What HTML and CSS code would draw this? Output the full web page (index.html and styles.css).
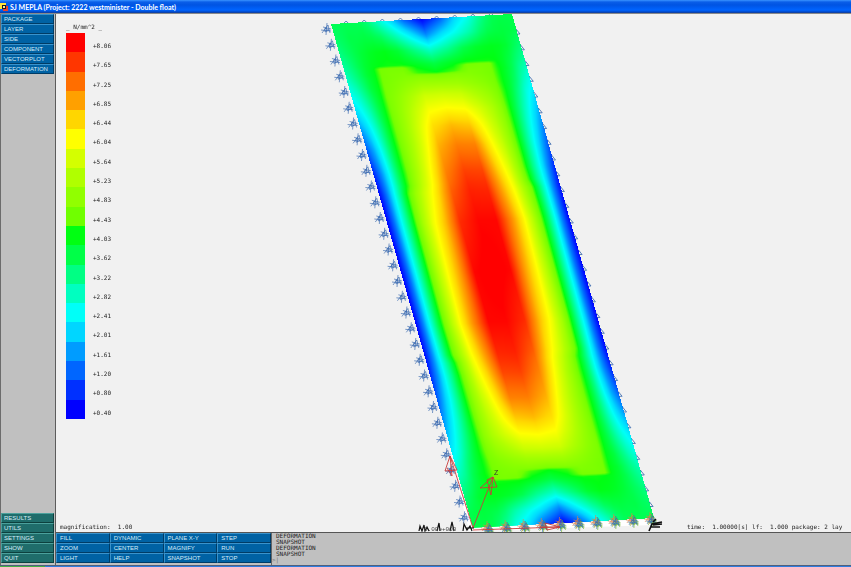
FILE: index.html
```html
<!DOCTYPE html>
<html lang="en">
<head>
<meta charset="utf-8">
<title>SJ MEPLA (Project: 2222 westminister - Double float)</title>
<link rel="stylesheet" href="styles.css">
</head>
<body>
<header class="titlebar">
  <svg class="app-icon" viewBox="0 0 8 8" aria-hidden="true">
    <rect x="0" y="0" width="6" height="6" fill="#ffe23a"/>
    <rect x="3" y="3" width="5" height="5" fill="#e8402a"/>
    <rect x="2" y="2" width="4" height="4" fill="#15152a"/>
    <rect x="3" y="3" width="2" height="2" fill="#ffe98a"/>
  </svg>
  <h1>SJ MEPLA (Project: 2222 westminister - Double float)</h1>
</header>
<main class="workspace">
  <nav class="sidebar">
    <div class="menu">
      <button>PACKAGE</button>
      <button>LAYER</button>
      <button>SIDE</button>
      <button>COMPONENT</button>
      <button>VECTORPLOT</button>
      <button>DEFORMATION</button>
    </div>
    <div class="menu menu-teal">
      <button>RESULTS</button>
      <button>UTILS</button>
      <button>SETTINGS</button>
      <button>SHOW</button>
      <button>QUIT</button>
    </div>
  </nav>
  <div class="content">
    <section class="view">
      <canvas id="field" class="plot" width="795" height="518"></canvas>
      <svg id="overlay" class="plot" viewBox="56 14 795 518">
        <defs>
          <g id="support" fill="none" stroke-width=".6">
            <path d="M-6 1L4 2M0-6L-1 6M-5 4L1-4L3 4M-4-2L4 0M-2 3L2 1L-2-1Z"/>
          </g>
          <g id="tick" fill="none" stroke-width=".8"><path d="M-1-3L3 2H0"/></g>
          <g id="ptick" fill="none" stroke-width=".8"><path d="M-2 1L0-1L2 1"/></g>
        </defs>
        <path d="M451 457L473 528L653 519L654 525L476 531L469 531Z" fill="#fff"/>
        <g id="marks"></g>
        <g fill="none" stroke="#c83c3c" stroke-width=".9">
          <path d="M473 528L450 456M450 456L445 471L457 470ZM450 456L452 476L447 468"/>
          <path d="M473 528L493 477M493 477L480 488L497 487ZM493 477L491 495L487 480Z"/>
          <path d="M473 530L560 527M560 527L545 523L547 530ZM560 527L540 527"/>
        </g>
        <g fill="none" stroke="#111" stroke-width="1.2">
          <path d="M419 531L420 526L422 531L424 525L425 531L427 527L429 531"/>
          <path d="M437 531L439 523L440 531M450 531L452 522L454 531M463 531L464 524L467 530L470 526L472 531M466 528H474"/>
          <path d="M649 531L652 524L662 522M651 527L660 527M653 522L656 519M653 525L662 524" stroke-width="1.6"/>
        </g>
        <text class="axis" x="494" y="475">Z</text>
        <text class="origin" x="424" y="531">0.00e+000</text>
      </svg>
      <div class="readout">
        <div class="legend">
          <p class="unit">_ N/mm^2 _</p>
          <ul id="scale" class="scale"></ul>
        </div>
        <div class="status">
          <span class="mag">magnification:&nbsp; 1.00</span>
          <span class="time">time:&nbsp; 1.00000[s] lf:&nbsp; 1.000 package: 2 lay</span>
        </div>
      </div>
    </section>
    <section class="console">
      <div class="commands">
        <button>FILL</button><button>DYNAMIC</button><button>PLANE X-Y</button><button>STEP</button>
        <button>ZOOM</button><button>CENTER</button><button>MAGNIFY</button><button>RUN</button>
        <button>LIGHT</button><button>HELP</button><button>SNAPSHOT</button><button>STOP</button>
      </div>
      <div class="log">
        <p>DEFORMATION</p>
        <p>SNAPSHOT</p>
        <p>DEFORMATION</p>
        <p>SNAPSHOT</p>
        <p class="prompt">&gt;|</p>
      </div>
    </section>
  </div>
</main>
<footer class="taskbar"><span class="start"></span></footer>
<script src="plot.js"></script>
</body>
</html>
```
FILE: styles.css
```css
* { box-sizing: border-box; }

body {
  margin: 0;
  height: 100vh;
  display: flex;
  flex-direction: column;
  overflow: hidden;
  background: #c0c0c0;
  font-family: "Liberation Sans", Arial, sans-serif;
}

h1, p, ul { margin: 0; padding: 0; }

.titlebar {
  flex: none;
  display: flex;
  align-items: center;
  gap: 2px;
  height: 13px;
  background: linear-gradient(#3a94ff 0, #0a5ee8 2px, #0054e3 5px, #0064ff 10px, #0048c8 12px, #1c3c8c 13px);
}
.app-icon { width: 8px; height: 8px; }
.titlebar h1 {
  color: #fff;
  font: bold 7px/10px Lato, sans-serif;
  white-space: nowrap;
}

.workspace { flex: 1; min-height: 0; display: flex; border-top: 1px solid #8a8a8a; }

.sidebar {
  flex: none;
  width: 56px;
  display: flex;
  flex-direction: column;
  justify-content: space-between;
  padding: 0 1px 2px 0;
  border-left: 1px solid #6c6c6c;
  border-right: 1px solid #5c5c5c;
}
.menu { display: grid; grid-auto-rows: 10px; }

button {
  margin: 0;
  padding: 0 0 0 2px;
  border: 1px solid;
  border-color: #3a93cc #003c66 #003c66 #3a93cc;
  border-radius: 0;
  background: #0062a4;
  color: #d6ecf8;
  font: 6px/8px "Liberation Sans", Arial, sans-serif;
  text-align: left;
  white-space: nowrap;
}
.menu-teal button {
  border-color: #4ba09c #0c403e #0c403e #4ba09c;
  background: #1f6d6b;
}

.content { flex: 1; min-width: 0; display: flex; flex-direction: column; }

.view {
  flex: 1;
  min-height: 0;
  display: grid;
  grid-template: minmax(0, 1fr) / minmax(0, 1fr);
  overflow: hidden;
  background: #f1f1f1;
  color: #222;
  font: 6px/8px "DejaVu Sans Mono", monospace;
}
.view > * { grid-area: 1 / 1; }
.plot { display: block; width: 100%; height: 100%; object-fit: contain; }
.readout {
  display: flex;
  flex-direction: column;
  justify-content: space-between;
  padding: 9px 0 1px 4px;
}
.legend { padding-left: 6px; }
.unit { padding-bottom: 2px; }
.scale {
  display: grid;
  grid-template-rows: repeat(20, 1fr);
  height: 386px;
  list-style: none;
}
.scale li { display: flex; gap: 8px; }
.swatch { width: 19px; }
.value { padding-top: 9px; }
.status { display: flex; justify-content: space-between; white-space: nowrap; }
.time { flex: none; width: 164px; }
.axis { font: 7px "Liberation Sans", sans-serif; fill: #333; }
.origin { font: 6px "Liberation Mono", monospace; fill: #444; }

.console { flex: none; display: flex; height: 33px; border-top: 1px solid #555; }
.commands {
  flex: none;
  width: 215px;
  display: grid;
  grid-template-columns: repeat(4, 1fr);
  grid-auto-rows: 10px;
}
.commands button { padding-left: 3px; }
.log {
  flex: 1;
  padding-left: 4px;
  border-left: 1px solid #666;
  color: #222;
  font: 6px/6px "DejaVu Sans Mono", monospace;
}
.prompt { color: #777; margin-left: -4px; }

.taskbar { flex: none; height: 2px; background: #2f7de0; border-top: 1px solid #50607c; }
.start { display: block; width: 45px; height: 1px; background: #43b045; }
```
FILE: plot.js
```js
// Colour scale, lowest stress first.
const COLORS = [
  [0, 0, 255], [0, 48, 255], [0, 102, 255], [0, 156, 255], [0, 214, 255],
  [0, 255, 248], [0, 255, 192], [0, 255, 132], [0, 255, 72], [0, 255, 18],
  [112, 255, 0], [145, 255, 0], [176, 255, 0], [212, 255, 0], [255, 255, 0],
  [255, 214, 0], [255, 160, 0], [255, 110, 0], [255, 54, 0], [255, 0, 0]
];
const VALUES = ["8.06", "7.65", "7.25", "6.85", "6.44", "6.04", "5.64", "5.23", "4.83", "4.43",
  "4.03", "3.62", "3.22", "2.82", "2.41", "2.01", "1.61", "1.20", "0.80", "0.40"];

const scale = document.getElementById("scale");
VALUES.forEach((value, i) => {
  const item = document.createElement("li");
  item.innerHTML = `<span class="swatch" style="background:rgb(${COLORS[19 - i]})"></span><span class="value">+${value}</span>`;
  scale.append(item);
});

// Stress levels at the nodes of one half of the plate; the other half is point symmetric.
const U = [0, .04, .08, .12, .16, .2, .25, .32, .4, .5, .6, .68, .75, .8, .84, .88, .92, .96, 1];
const HALF = [
  [0,    [7.8, 7.8, 7.8, 7.8, 7.7, 7.2, 6, 4.4, 2, 0, 1.8, 4, 5.2, 6.4, 7.2, 7.8, 8, 8, 8]],
  [.03,  [7.5, 7.7, 8, 8, 8.1, 8, 7.6, 6.4, 4.8, 2.6, 4.4, 5.5, 6.5, 7.4, 7.9, 8.1, 8.2, 8.1, 7.9]],
  [.06,  [7, 7.5, 7.9, 8.3, 8.6, 8.8, 8.9, 8.4, 7.2, 5.8, 6.8, 7.9, 8.5, 8.7, 8.8, 8.7, 8.4, 7.8, 7.2]],
  [.088, [6.5, 7.1, 7.8, 8.4, 8.8, 9, 9.1, 9.1, 8.7, 8.1, 8.7, 9.1, 9.1, 9.1, 9, 8.6, 8, 7.2, 6.5]],
  [.094, [6.4, 7, 7.7, 8.4, 8.9, 10.2, 10.3, 10.2, 9, 8.4, 9, 10.2, 10.3, 10.2, 9.1, 8.6, 7.9, 7, 6.3]],
  [.105, [6.1, 6.8, 7.6, 8.4, 8.9, 10.2, 10.4, 10.5, 9.5, 9, 9.6, 10.5, 10.4, 10.2, 9.2, 8.6, 7.8, 6.7, 5.9]],
  [.111, [5.9, 6.7, 7.5, 8.3, 8.9, 10.2, 10.4, 10.6, 10.6, 10.4, 10.6, 10.6, 10.4, 10.2, 9.2, 8.5, 7.7, 6.6, 5.7]],
  [.13,  [5.4, 6.2, 7.2, 8.2, 8.9, 10.3, 10.6, 11.1, 11.6, 11.6, 11.5, 11.1, 10.7, 10.3, 9.2, 8.4, 7.4, 6.1, 5.1]],
  [.15,  [4.9, 5.7, 6.8, 7.9, 8.9, 10.4, 10.9, 11.8, 12.8, 12.9, 12.7, 11.9, 11.2, 10.5, 9.3, 8.2, 6.9, 5.5, 4.5]],
  [.18,  [4, 5, 6.2, 7.6, 8.9, 10.4, 11.2, 12.5, 13.9, 14.2, 14, 13, 11.9, 10.8, 9.3, 7.8, 6.3, 4.9, 3.6]],
  [.21,  [3, 4.2, 5.7, 7.3, 8.9, 10.4, 11.4, 13, 14.8, 15.5, 15.2, 13.7, 12.2, 10.9, 9.3, 7.5, 5.8, 4.3, 2.8]],
  [.25,  [1.8, 3.3, 5.1, 7.1, 8.9, 10.4, 11.6, 13.4, 15.7, 16.7, 16.6, 14.4, 12.6, 11, 9.3, 7.2, 5.3, 3.6, 1.8]],
  [.3,   [.7, 2.5, 4.6, 6.9, 8.9, 10.5, 12, 14.1, 16.6, 17.8, 17.7, 15.2, 13.2, 11.2, 9.3, 7, 5, 2.8, .8]],
  [.325, [.3, 2.3, 4.6, 6.9, 9, 10.7, 12.4, 14.4, 17, 18.2, 18.1, 15.6, 13.5, 11.4, 9.5, 7.1, 5, 2.6, .4]],
  [.34,  [.1, 2.2, 4.7, 7.1, 9.6, 11.2, 12.8, 14.7, 17.3, 18.4, 18.3, 15.8, 13.7, 11.7, 10.1, 7.6, 5.1, 2.5, .2]],
  [.4,   [0, 2.2, 4.9, 7.3, 9.9, 11.8, 13.6, 15.5, 18.2, 18.9, 18.9, 16.5, 14.2, 12.2, 10.3, 7.8, 5.2, 2.4, 0]],
  [.5,   [0, 2.2, 5, 7.5, 10.1, 12, 13.9, 16, 18.9, 19.3, 18.9, 16, 13.9, 12, 10.1, 7.5, 5, 2.2, 0]]
];

const lerpRow = (xs, row, x) => {
  let i = 1;
  while (i < xs.length - 1 && xs[i] < x) i++;
  const t = (x - xs[i - 1]) / (xs[i] - xs[i - 1]);
  return row[i - 1] + (row[i] - row[i - 1]) * t;
};

// The column positions mirror onto 1 - u, so the mirrored rows are resampled on U.
const MU = U.map(u => 1 - u).reverse();
const NODES = HALF.concat(HALF.slice(0, -1).reverse().map(([v, row]) =>
  [1 - v, U.map(u => lerpRow(MU, [...row].reverse(), u))]));

function level(u, v) {
  let j = 1;
  while (j < NODES.length - 1 && NODES[j][0] < v) j++;
  const [v0, a] = NODES[j - 1], [v1, b] = NODES[j];
  const t = (v - v0) / (v1 - v0);
  return lerpRow(U, a, u) * (1 - t) + lerpRow(U, b, u) * t;
}

// Plate: one corner and its two edge vectors, in view coordinates.
const OX = 331, OY = 24, AX = 181, AY = -10, BX = 142, BY = 504;
const DET = AX * BY - AY * BX;
const canvas = document.getElementById("field");
const ctx = canvas.getContext("2d");
const image = ctx.createImageData(canvas.width, canvas.height);
for (let y = 0; y < canvas.height; y++) {
  for (let x = 0; x < canvas.width; x++) {
    const dx = x + 56.5 - OX, dy = y + 14.5 - OY;
    const u = (dx * BY - dy * BX) / DET, v = (AX * dy - AY * dx) / DET;
    if (u < 0 || u > 1 || v < 0 || v > 1) continue;
    const s = Math.max(0, Math.min(18.999, level(u, v)));
    const k = Math.floor(s), f = s - k, p = (y * canvas.width + x) * 4;
    for (let c = 0; c < 3; c++) image.data[p + c] = COLORS[k][c] + (COLORS[k + 1][c] - COLORS[k][c]) * f;
    image.data[p + 3] = 255;
  }
}
ctx.putImageData(image, 0, 0);

// Edge supports.
let marks = "";
const use = (id, x, y, stroke) =>
  `<use href="#${id}" x="${x.toFixed(1)}" y="${y.toFixed(1)}" stroke="${stroke}"/>`;
for (let i = 0; i < 32; i++) {
  const v = i / 32;
  marks += use("support", OX + BX * v - 4, OY + BY * v + 5, "#2459a8");
  if (i < 31) marks += use("tick", OX + AX + BX * v + 5, OY + AY + BY * v + 18, "#3566ac");
}
for (let i = 1; i <= 10; i++) {
  const x = OX + AX * i / 10, y = OY + AY * i / 10;
  marks += use("ptick", x - 3, y - 1, "#3566ac");
  marks += use("support", x + BX - 1, y + BY + 3, "#6cb020");
  marks += use("support", x + BX - 4, y + BY, "#e08040");
  marks += use("support", x + BX - 2, y + BY + 2, "#2c6cb8");
}
document.getElementById("marks").innerHTML = marks;
```
